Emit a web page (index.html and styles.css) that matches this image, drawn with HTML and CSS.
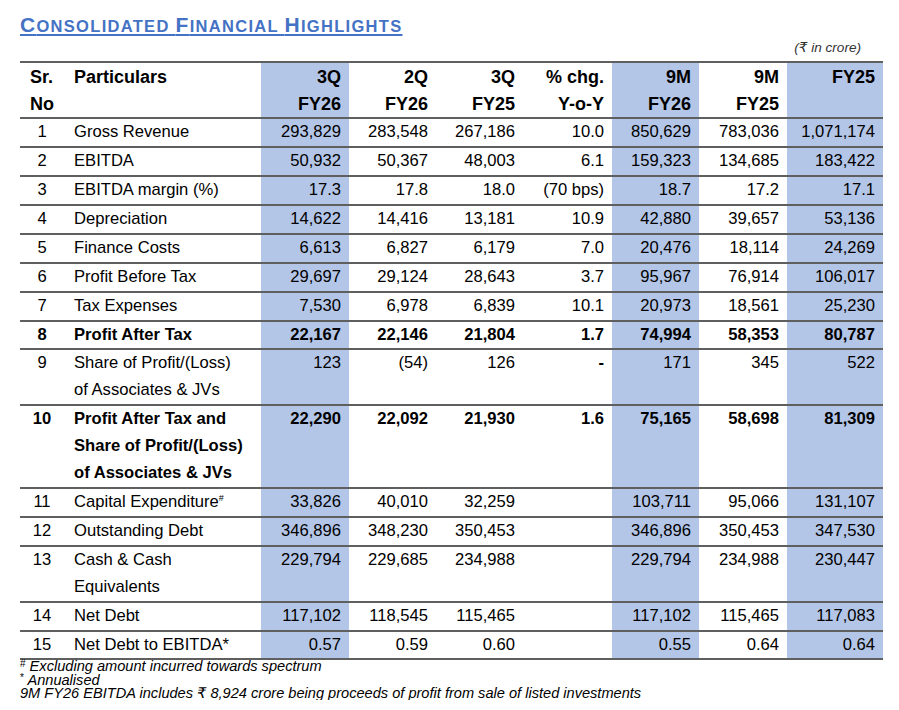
FILE: index.html
```html
<!DOCTYPE html>
<html>
<head>
<meta charset="utf-8">
<link rel="stylesheet" href="styles.css">
</head>
<body>
<div class="page">
  <h1 class="title"><span class="big">C</span>ONSOLIDATED <span class="big">F</span>INANCIAL <span class="big">H</span>IGHLIGHTS</h1>
  <div class="unit">(₹ in crore)</div>
  <table class="fin">
    <colgroup>
      <col class="c-sr"><col class="c-part"><col class="c-num"><col class="c-num2"><col class="c-num2"><col class="c-chg"><col class="c-num2"><col class="c-num"><col class="c-fy">
    </colgroup>
    <thead>
      <tr>
        <th class="sr">Sr.<br>No</th>
        <th class="part">Particulars</th>
        <th class="hl">3Q<br>FY26</th>
        <th>2Q<br>FY26</th>
        <th>3Q<br>FY25</th>
        <th>% chg.<br>Y-o-Y</th>
        <th class="hl">9M<br>FY26</th>
        <th>9M<br>FY25</th>
        <th class="hl">FY25<br>&nbsp;</th>
      </tr>
    </thead>
    <tbody>
      <tr><td class="sr">1</td><td class="part">Gross Revenue</td><td class="hl">293,829</td><td>283,548</td><td>267,186</td><td>10.0</td><td class="hl">850,629</td><td>783,036</td><td class="hl">1,071,174</td></tr>
      <tr><td class="sr">2</td><td class="part">EBITDA</td><td class="hl">50,932</td><td>50,367</td><td>48,003</td><td>6.1</td><td class="hl">159,323</td><td>134,685</td><td class="hl">183,422</td></tr>
      <tr><td class="sr">3</td><td class="part">EBITDA margin (%)</td><td class="hl">17.3</td><td>17.8</td><td>18.0</td><td>(70 bps)</td><td class="hl">18.7</td><td>17.2</td><td class="hl">17.1</td></tr>
      <tr><td class="sr">4</td><td class="part">Depreciation</td><td class="hl">14,622</td><td>14,416</td><td>13,181</td><td>10.9</td><td class="hl">42,880</td><td>39,657</td><td class="hl">53,136</td></tr>
      <tr><td class="sr">5</td><td class="part">Finance Costs</td><td class="hl">6,613</td><td>6,827</td><td>6,179</td><td>7.0</td><td class="hl">20,476</td><td>18,114</td><td class="hl">24,269</td></tr>
      <tr><td class="sr">6</td><td class="part">Profit Before Tax</td><td class="hl">29,697</td><td>29,124</td><td>28,643</td><td>3.7</td><td class="hl">95,967</td><td>76,914</td><td class="hl">106,017</td></tr>
      <tr><td class="sr">7</td><td class="part">Tax Expenses</td><td class="hl">7,530</td><td>6,978</td><td>6,839</td><td>10.1</td><td class="hl">20,973</td><td>18,561</td><td class="hl">25,230</td></tr>
      <tr class="bold"><td class="sr">8</td><td class="part">Profit After Tax</td><td class="hl">22,167</td><td>22,146</td><td>21,804</td><td>1.7</td><td class="hl">74,994</td><td>58,353</td><td class="hl">80,787</td></tr>
      <tr><td class="sr">9</td><td class="part">Share of Profit/(Loss)<br>of Associates &amp; JVs</td><td class="hl">123</td><td>(54)</td><td>126</td><td class="dash">-</td><td class="hl">171</td><td>345</td><td class="hl">522</td></tr>
      <tr class="bold"><td class="sr">10</td><td class="part">Profit After Tax and<br>Share of Profit/(Loss)<br>of Associates &amp; JVs</td><td class="hl">22,290</td><td>22,092</td><td>21,930</td><td>1.6</td><td class="hl">75,165</td><td>58,698</td><td class="hl">81,309</td></tr>
      <tr><td class="sr">11</td><td class="part">Capital Expenditure<sup class="mark">#</sup></td><td class="hl">33,826</td><td>40,010</td><td>32,259</td><td></td><td class="hl">103,711</td><td>95,066</td><td class="hl">131,107</td></tr>
      <tr><td class="sr">12</td><td class="part">Outstanding Debt</td><td class="hl">346,896</td><td>348,230</td><td>350,453</td><td></td><td class="hl">346,896</td><td>350,453</td><td class="hl">347,530</td></tr>
      <tr><td class="sr">13</td><td class="part">Cash &amp; Cash<br>Equivalents</td><td class="hl">229,794</td><td>229,685</td><td>234,988</td><td></td><td class="hl">229,794</td><td>234,988</td><td class="hl">230,447</td></tr>
      <tr><td class="sr">14</td><td class="part">Net Debt</td><td class="hl">117,102</td><td>118,545</td><td>115,465</td><td></td><td class="hl">117,102</td><td>115,465</td><td class="hl">117,083</td></tr>
      <tr><td class="sr">15</td><td class="part">Net Debt to EBITDA*</td><td class="hl">0.57</td><td>0.59</td><td>0.60</td><td></td><td class="hl">0.55</td><td>0.64</td><td class="hl">0.64</td></tr>
    </tbody>
  </table>
  <div class="notes">
    <p class="note"><sup class="fmark">#</sup> Excluding amount incurred towards spectrum</p>
    <p class="note"><sup class="fmark">*</sup> Annualised</p>
    <p class="note">9M FY26 EBITDA includes ₹ 8,924 crore being proceeds of profit from sale of listed investments</p>
  </div>
</div>
</body>
</html>
```
FILE: styles.css
```css
html, body {
  margin: 0;
  padding: 0;
  background: #ffffff;
}
.page {
  padding: 0 16px 0 20px;
  font-family: "Liberation Sans", "DejaVu Sans", Arial, sans-serif;
  color: #000;
}
.title {
  margin: 13px 0 0 0;
  font-size: 16.5px;
  line-height: 24px;
  font-weight: bold;
  color: #4472c4;
  letter-spacing: 1.3px;
  text-decoration: underline;
  text-decoration-thickness: 1.5px;
  text-underline-offset: 2px;
  display: inline-block;
}
.title .big {
  font-size: 21px;
}
.unit {
  margin: 2px 0 0 0;
  padding-right: 22px;
  text-align: right;
  font-size: 13.6px;
  line-height: 15px;
  font-style: italic;
  color: #333;
  height: 21px;
}
.fin {
  border-collapse: collapse;
  table-layout: fixed;
  width: 863px;
  border-top: 2px solid #5f5f5f;
}
.c-sr { width: 44px; }
.c-part { width: 197px; }
.c-num { width: 88px; }
.c-num2 { width: 87px; }
.c-chg { width: 89px; }
.c-fy { width: 96px; }
.fin th {
  font-size: 18px;
  line-height: 26.6px;
  font-weight: bold;
  text-align: right;
  vertical-align: top;
  padding: 1px 8px 0 0;
  border-bottom: 2px solid #5f5f5f;
  white-space: nowrap;
}
.fin td {
  font-size: 16.6px;
  line-height: 26.9px;
  text-align: right;
  vertical-align: top;
  padding: 0 8px 0 0;
  border-bottom: 2px solid #5f5f5f;
  white-space: nowrap;
}
.fin th.sr {
  text-align: left;
  padding: 1px 0 0 10px;
}
.fin th.part {
  text-align: left;
  padding: 1px 0 0 10px;
}
.fin td.part {
  text-align: left;
  padding: 0 0 0 10px;
}
.fin td.sr {
  text-align: center;
  padding: 0;
}
.fin .hl {
  background: #b4c6e7;
}
.fin tr.bold td {
  font-weight: bold;
}
.fin td.dash {
  font-weight: bold;
}
.mark {
  font-size: 9px;
  line-height: 0;
  vertical-align: 6px;
}
.note {
  margin: 0;
  font-size: 14.6px;
  line-height: 13.3px;
  font-style: italic;
  color: #000;
}
.fmark {
  font-size: 10px;
  line-height: 0;
  vertical-align: 4px;
  font-style: normal;
}
```
